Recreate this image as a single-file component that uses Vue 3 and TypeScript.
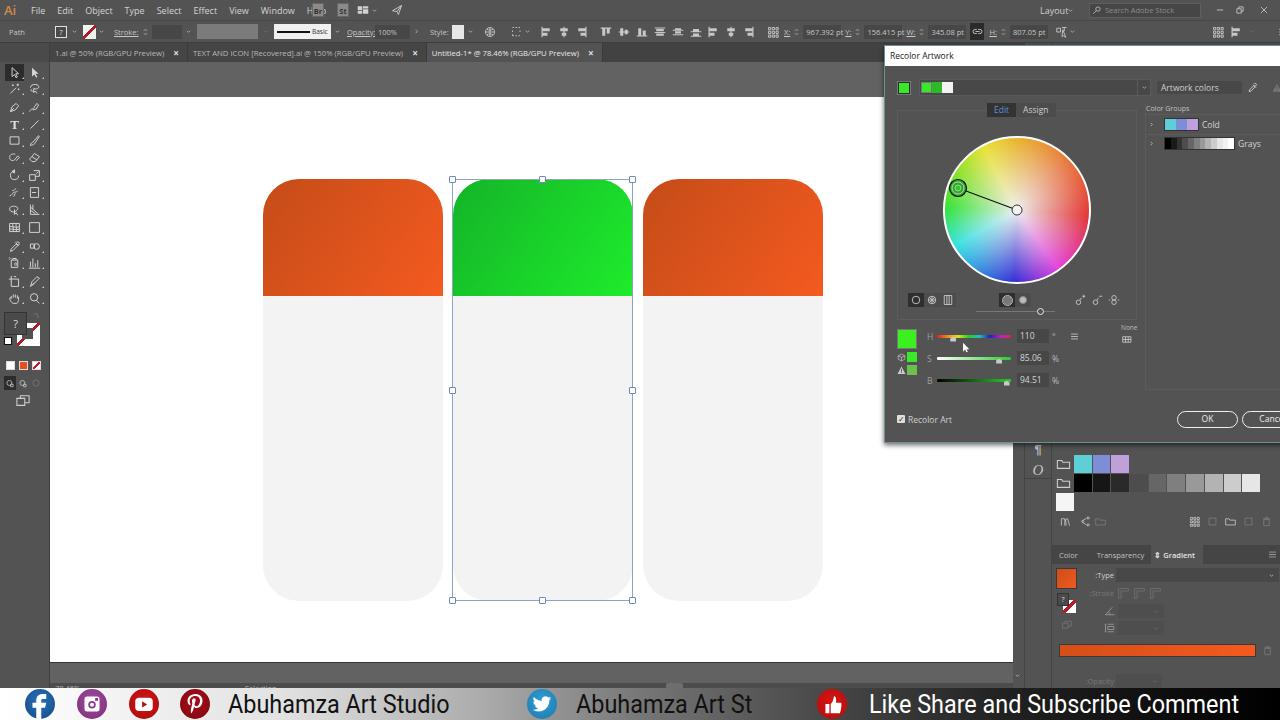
<script setup lang="ts">
import { h } from 'vue'
import type { FunctionalComponent } from 'vue'

const strokeIcons: Record<string, string> = {
  chev: 'M5 6.5 8 9.5 11 6.5',
  chevR: 'M6.5 5 9.5 8 6.5 11',
  select: 'M5 2V13L8 10.5 10 14.5 11.5 13.5 9.5 9.5H13Z',
  wand: 'M3 14 10 7M12 2V5M10.5 3.5H13.5M13 8V10M12 9H14M6 3V5M5 4H7',
  lasso: 'M3 7C3 4 6 3 9 3S14 5 13 7 9 9 7 8M7 8V13L9 11 11 14M4 9C3 11 5 12 6 11',
  pen: 'M3 13 5 7 10 3 13 6 9 11ZM3 13 7 9',
  curve: 'M2 13C4 8 6 12 8 7L11 3 13 5 10 10 6 11',
  line: 'M3 13 13 3',
  rect: 'M2.5 3.5H13.5V12.5H2.5Z',
  brush: 'M3 14C3 11 5 11 6 10L13 2 14 3 8 12C7 13 5 14 3 14Z',
  shaper: 'M2 8C2 4 6 3 9 4M2 8C2 11 5 13 8 11L12 6 14 8 10 12',
  eraser: 'M2 10 8 3 14 7 9 13H5Z M5 7 11 11',
  rotate: 'M13 8A5 5 0 1 1 8 3M8 1V5L5 3Z',
  scale: 'M2 7H9V14H2ZM7 2H14V9H9M10 6 13 3',
  warp: 'M2 12C5 12 5 9 7 8 9 7 10 8 12 6M5 5C7 7 8 4 10 3M7 13 9 9',
  free: 'M3 2H13V14H3ZM5 8 10 8',
  builder: 'M2 7C2 4 8 3 11 5S10 11 7 11 2 10 2 7ZM8 8V14L10 12 12 15',
  chart: 'M2 14H14M4 14V9M8 14V3M12 14V6M6 14V7M10 14V9',
  persp: 'M3 2V14H14M3 5 12 13M3 9 9 13M6 2V8',
  mesh: 'M2 3H14V13H2ZM2 7C6 6 9 9 14 7M2 10C6 9 9 12 14 10M6 3C5 7 8 9 6 13M10 3C9 7 12 9 10 13',
  drop: 'M3 14 4 11 10 5 12 7 6 13ZM9 3 13 7M10 2 11 3C12 1 15 3 13 5L14 6',
  blend: 'M3 5H8V10H3ZM7 8A3.5 3.5 0 1 0 14 8 3.5 3.5 0 1 0 7 8',
  spray: 'M4 5H12V14H4ZM6 5V3H10V5M8 10A1.5 1.5 0 1 0 8 9.9M1 2H2M1 4H2M3 3H4',
  column: 'M3 14V7M6 14V3M9 14V9M12 14V5M1 15H15',
  board: 'M4 5H13V14H4ZM4 1V5H1M7 2H10',
  slice: 'M3 14 5 8 11 2 14 4 8 10ZM3 14 8 10',
  hand: 'M4 8V5M6.5 7V3M9 7V3M11.5 8V4M4 8 2.5 7C1 8 4 14 7 14H10C13 14 13 10 13 6',
  zoom: 'M3 6.5A4.5 4.5 0 1 0 12 6.5 4.5 4.5 0 1 0 3 6.5M10 10 14 14',
  globe: 'M2 8A6 6 0 1 0 14 8 6 6 0 1 0 2 8M2 8H14M8 2V14M4 4C6 6 10 6 12 4M4 12C6 10 10 10 12 12',
  dashed: 'M2 2H4M6 2H8M10 2H12M2 6V8M12 6V8M2 11V13H4M6 13H8M10 13H12',
  dgrid: 'M2 2H5V5H2ZM7 2H10V5H7ZM12 2H15V5H12ZM2 7H5V10H2ZM7 7H10V10H7ZM12 7H15V10H12ZM2 12H5V15H2ZM7 12H10V15H7ZM12 12H15V15H12Z',
  link: 'M7 5H4.5A3 3 0 0 0 4.5 11H7M9 5H11.5A3 3 0 0 1 11.5 11H9M5 8H11',
  trans: 'M1 3H6V8H1ZM8 2 14 2M11 2V7M9 5 13 15 10 13 8 14Z',
  step: 'M5 6 8 3 11 6M5 10 8 13 11 10',
  menu: 'M3 4.5H13M3 8H13M3 11.5H13',
  eye: 'M3 14 4 11 10 5 12 7 6 13ZM9 4 13 8M10 2 11 3C12 1 15 3 13 5L14 6',
  search: 'M6 6.5A3.5 3.5 0 1 0 13 6.5 3.5 3.5 0 1 0 6 6.5M7 9 2 14',
  min: 'M3 8H13',
  restore: 'M3 6H10V13H3ZM6 6V3H13V10H10',
  close: 'M3 3 13 13M13 3 3 13',
  rocket: 'M2 9 14 2 10 14 8 10ZM8 10 14 2',
  ring: 'M3 8A5 5 0 1 0 13 8 5 5 0 1 0 3 8',
  wheelSeg: 'M3 8A5 5 0 1 0 13 8 5 5 0 1 0 3 8M8 3V13M3 8H13M4.5 4.5 11.5 11.5M11.5 4.5 4.5 11.5',
  bars: 'M3 2H13V14H3ZM6.5 2V14M9.5 2V14',
  addC: 'M3 11A3 3 0 1 0 9 11 3 3 0 1 0 3 11M8 8 10 5M11 3H15M13 1V5',
  subC: 'M3 11A3 3 0 1 0 9 11 3 3 0 1 0 3 11M8 8 10 5M11 3H15',
  linkC: 'M5 5A3 3 0 1 1 11 5 3 3 0 1 1 5 5M5 11A3 3 0 1 1 11 11 3 3 0 1 1 5 11M1 8H3M13 8H15',
  table: 'M1 4H13V12H1ZM1 8H13M5 4V12M9 4V12',
  cube: 'M8 2 14 5V11L8 14 2 11V5ZM2 5 8 8 14 5M8 8V14',
  swapA: 'M4 3H11V9M9 7 11 9 13 7',
  folder: 'M1 4H6L7 6H15V13H1Z',
  lib: 'M2 14V4H7V14M9 14 8 5 11 4 14 14',
  share: 'M4 8A1.5 1.5 0 1 0 4 7.9M12 3A1.5 1.5 0 1 0 12 2.9M12 13A1.5 1.5 0 1 0 12 12.9M5 7 11 3M5 9 11 13',
  newPage: 'M3 3H13V13H3Z',
  trash: 'M4 5H12V14H4ZM3 4H13M6 2H10V4',
  ang: 'M2 13H14M2 13 11 3M8 13C8 11 7 10 6 9',
  asp: 'M5 3H13M5 13H13M1 3H3M2 3V13M1 13H3M5 6H13V10H5Z',
  grad: 'M2 2H14V14H2Z',
  corner1: 'M2 14V2H14V5H5V14Z',
  scr: 'M1 5H10V13H1ZM5 5V2H15V10H10',
  draw1: 'M3 8A4 4 0 1 0 11 8 4 4 0 1 0 3 8M9 10H13V14H9Z',
}

const FILLED = new Set(['direct', 'align1', 'align2', 'align3', 'align4', 'align5', 'align6', 'flyout', 'dist1', 'dist2', 'dist3', 'warn', 'thumb', 'cursor', 'layout'])
const fillIcons: Record<string, string> = {
  direct: 'M5 2V13L8 10.5 10 14.5 11.5 13.5 9.5 9.5H13Z',
  align1: 'M2 1H3.5V15H2ZM3.5 3H13V7H3.5ZM3.5 9H10V13H3.5Z',
  align2: 'M7.2 1H8.8V15H7.2ZM3 3H13V7H3ZM5 9H11V13H5Z',
  align3: 'M12.5 1H14V15H12.5ZM3 3H12.5V7H3ZM6 9H12.5V13H6Z',
  align4: 'M1 2H15V3.5H1ZM3 3.5H7V13H3ZM9 3.5H13V10H9Z',
  align5: 'M1 7.2H15V8.8H1ZM3 3H7V13H3ZM9 5H13V11H9Z',
  align6: 'M1 12.5H15V14H1ZM3 3H7V12.5H3ZM9 6H13V12.5H9Z',
  dist1: 'M1 2H15V3.2H1ZM1 8H15V9.2H1ZM3 4H13V7H3ZM3 10H13V13H3Z',
  dist2: 'M1 5H15V6.2H1ZM1 11H15V12.2H1ZM4 3H12V5H4ZM4 7H12V10H4Z',
  dist3: 'M1 7H15V8.2H1ZM1 13H15V14.2H1ZM4 4H12V7H4ZM4 10H12V13H4Z',
  warn: 'M8 1 15 14H1ZM7.2 5V10H8.8V5ZM7.2 11V12.5H8.8V11Z',
  thumb: 'M3 8H6V15H3ZM7 8C9 6 9 4 9.5 2 11 2 11.5 4 11 7H15C15.5 8 15 13 14 15H7Z',
  cursor: 'M3 1V14L6 11 8 15 10 14 8 10.5H12Z',
  layout: 'M1 3H7V8H1ZM8 3H15V6H8ZM8 7H15V13H8ZM1 9H7V13H1Z',
}

const Ic: FunctionalComponent<{ n: string }> = (props) => {
  const solid = FILLED.has(props.n)
  return h('svg', { class: 'ic', viewBox: '0 0 16 16' }, [
    h('path', {
      d: solid ? fillIcons[props.n] : strokeIcons[props.n],
      fill: solid ? 'currentColor' : 'none',
      stroke: solid ? 'none' : 'currentColor',
      'stroke-width': 1.2,
    }),
  ])
}
Ic.props = ['n']

const menus = ['File', 'Edit', 'Object', 'Type', 'Select', 'Effect', 'View', 'Window', 'Help']

const tabs = [
  { title: '1.ai @ 50% (RGB/GPU Preview)', active: false },
  { title: 'TEXT AND ICON [Recovered].ai @ 150% (RGB/GPU Preview)', active: false },
  { title: 'Untitled-1* @ 78.46% (RGB/GPU Preview)', active: true },
]

// tool palette, grouped the way Illustrator separates its sections
const toolGroups = [
  [['select', 'direct'], ['wand', 'lasso']],
  [['pen', 'curve'], ['T', 'line'], ['rect', 'brush'], ['shaper', 'eraser']],
  [['rotate', 'scale'], ['warp', 'free'], ['builder', 'persp']],
  [['mesh', 'grad']],
  [['drop', 'blend'], ['spray', 'column']],
  [['board', 'slice'], ['hand', 'zoom']],
]

const coords = [
  { label: 'X:', value: '967.392 pt', cls: 'wx' },
  { label: 'Y:', value: '156.415 pt', cls: 'wy' },
  { label: 'W:', value: '345.08 pt', cls: 'ww' },
]

const cards = [
  { id: 1, tone: 'orange' },
  { id: 2, tone: 'green' },
  { id: 3, tone: 'orange' },
]

const handles = ['tl', 'tc', 'tr', 'ml', 'mr', 'bl', 'bc', 'br']

const sliders = [
  { label: 'H', cls: 'hue', thumb: 22, value: '110', unit: '°' },
  { label: 'S', cls: 'sat', thumb: 84, value: '85.06', unit: '%' },
  { label: 'B', cls: 'bri', thumb: 94, value: '94.51', unit: '%' },
]

const grays = ['#000', '#161616', '#2a2a2a', '#4d4d4d', '#666', '#7f7f7f', '#999', '#b3b3b3', '#ccc', '#e6e6e6']
const coldColors = ['#5ecfd6', '#7e8ed6', '#c0a0dc']
const grayRamp = ['#000', '#1a1a1a', '#333', '#4d4d4d', '#666', '#808080', '#999', '#b3b3b3', '#ccc', '#e6e6e6', '#f2f2f2', '#fff']
</script>

<template>
  <div class="app">
    <header class="menubar">
      <span class="ai">Ai</span>
      <nav class="menus">
        <span v-for="m in menus" :key="m" class="menu">{{ m }}</span>
      </nav>
      <span class="bridge">Br</span>
      <span class="bridge st">St</span>
      <Ic n="layout" class="layout-ic" />
      <Ic n="chev" class="chev c-a" />
      <Ic n="rocket" class="rocket" />
      <div class="menu-right">
        <span class="layout-label">Layout</span>
        <Ic n="chev" class="chev" />
        <div class="search"><Ic n="search" class="search-ic" /><span>Search Adobe Stock</span></div>
        <Ic n="min" class="win w-min" />
        <Ic n="restore" class="win w-res" />
        <Ic n="close" class="win w-close" />
      </div>
    </header>

    <div class="controlbar">
      <span class="path-label">Path</span>
      <span class="fillbox">?</span>
      <Ic n="chev" class="chev m3" />
      <span class="strokebox"></span>
      <Ic n="chev" class="chev m1" />
      <span class="clabel u stroke-l">Stroke:</span>
      <Ic n="step" class="step" />
      <span class="cinput wstroke"></span>
      <Ic n="chev" class="chev m2" />
      <span class="varbox"></span>
      <Ic n="chev" class="chev m3 dim" />
      <span class="basic"><i></i>Basic</span>
      <Ic n="chev" class="chev m2" />
      <span class="clabel u op-l">Opacity:</span>
      <span class="cinput wop">100%</span>
      <Ic n="chevR" class="chev m2" />
      <span class="clabel style-l">Style:</span>
      <span class="stylebox"></span>
      <Ic n="chev" class="chev m2" />
      <Ic n="globe" class="tool-ic glb" />
      <Ic n="dashed" class="tool-ic dsh" />
      <Ic n="chev" class="chev" />
      <div class="aligns first">
        <Ic n="align1" class="al" /><Ic n="align2" class="al" /><Ic n="align3" class="al" />
      </div>
      <div class="aligns second">
        <Ic n="align4" class="al" /><Ic n="align5" class="al" /><Ic n="align6" class="al" />
        <Ic n="dist1" class="al" /><Ic n="dist2" class="al" /><Ic n="dist3" class="al" />
      </div>
      <div class="aligns fourth">
        <Ic n="align1" class="al" /><Ic n="align2" class="al" /><Ic n="align3" class="al" />
      </div>
      <Ic n="dgrid" class="tool-ic dgrid" />
      <div v-for="c in coords" :key="c.label" class="coord" :class="c.cls">
        <span class="clabel u">{{ c.label }}</span>
        <Ic n="step" class="step" />
        <span class="cinput">{{ c.value }}</span>
      </div>
      <span class="linkbtn"><Ic n="link" class="link-ic" /></span>
      <div class="coord wh">
        <span class="clabel u">H:</span>
        <Ic n="step" class="step" />
        <span class="cinput">807.05 pt</span>
      </div>
      <Ic n="trans" class="tool-ic trn" />
      <Ic n="chev" class="chev" />
      <div class="cb-right">
        <Ic n="dgrid" class="tool-ic" />
        <Ic n="align1" class="tool-ic" />
        <Ic n="chev" class="chev dim" />
        <Ic n="menu" class="tool-ic list" />
      </div>
    </div>

    <div class="main">
      <aside class="tools">
        <div class="tool-grip"></div>
        <div v-for="(group, g) in toolGroups" :key="g" class="tool-group">
          <div v-for="(row, r) in group" :key="r" class="tool-row">
            <span v-for="t in row" :key="t" class="tool" :class="{ on: t === 'select' }">
              <span v-if="t === 'T'" class="t-glyph">T</span>
              <Ic v-else :n="t" class="tool-svg" />
              <i class="flyout"></i>
            </span>
          </div>
        </div>
        <div class="fillstroke">
          <span class="fs-stroke"><i></i></span>
          <span class="fs-fill">?</span>
          <Ic n="swapA" class="fs-swap" />
          <span class="fs-default"></span>
        </div>
        <div class="modes">
          <span class="mode white"></span>
          <span class="mode orange"></span>
          <span class="mode none"></span>
        </div>
        <div class="modes draw">
          <span class="dm on"><Ic n="draw1" class="dm-ic" /></span>
          <span class="dm"><Ic n="draw1" class="dm-ic" /></span>
          <span class="dm off"><Ic n="ring" class="dm-ic" /></span>
        </div>
        <Ic n="scr" class="screen" />
      </aside>

      <section class="center">
        <div class="tabs">
          <div v-for="t in tabs" :key="t.title" class="tab" :class="{ active: t.active }">
            <span>{{ t.title }}</span>
            <b>×</b>
          </div>
        </div>
        <div class="stage">
          <div class="docview">
            <div class="pasteboard">
              <div class="artboard">
                <div v-for="c in cards" :key="c.id" class="card">
                  <div class="card-top" :class="c.tone"></div>
                  <div v-if="c.tone === 'green'" class="selection">
                    <i v-for="hd in handles" :key="hd" class="handle" :class="hd"></i>
                  </div>
                </div>
              </div>
            </div>
            <div class="hscroll">
              <div class="status">
                <span class="zoom-val">78.46%</span>
                <span class="sel-state">Selection</span>
                <i class="thumb"></i>
              </div>
            </div>
          </div>
          <div class="vscroll"><Ic n="chev" class="chev" /></div>
        </div>
      </section>

      <div class="dock">
        <div class="dock-box">
          <span class="para">¶</span>
          <span class="oglyph">O</span>
        </div>
      </div>

      <aside class="panels">
        <div class="swatches">
          <div class="sw-row">
            <Ic n="folder" class="folder" />
            <span v-for="c in coldColors" :key="c" class="sw" :style="{ background: c }"></span>
          </div>
          <div class="sw-row">
            <Ic n="folder" class="folder" />
            <span v-for="c in grays" :key="c" class="sw" :style="{ background: c }"></span>
          </div>
          <div class="sw-row">
            <span class="sw last"></span>
          </div>
          <div class="sw-foot">
            <Ic n="lib" class="ft" /><Ic n="share" class="ft s2" /><Ic n="folder" class="ft dimmer s3" />
            <Ic n="dgrid" class="ft s4" /><Ic n="newPage" class="ft dimmer s5" /><Ic n="folder" class="ft s5" />
            <Ic n="newPage" class="ft dimmer s5" /><Ic n="trash" class="ft dimmer s5" />
          </div>
        </div>
        <div class="ptabs">
          <span class="ptab">Color</span>
          <span class="ptab">Transparency</span>
          <span class="ptab active">⇕ Gradient</span>
          <Ic n="menu" class="ptab-menu" />
        </div>
        <div class="gradient">
          <div class="g-top">
            <div class="g-left">
              <span class="g-swatch"></span>
              <span class="g-mini"><i class="q">?</i><i class="s"></i></span>
              <Ic n="scr" class="g-rev" />
            </div>
            <div class="g-right">
              <div class="g-line"><span class="g-label on">Type:</span><span class="g-select wide"><Ic n="chev" class="chev" /></span></div>
              <div class="g-line l2"><span class="g-label">Stroke:</span><span class="g-btns"><Ic n="corner1" class="gb" /><Ic n="corner1" class="gb" /><Ic n="corner1" class="gb" /></span></div>
              <div class="g-line l3"><Ic n="ang" class="g-lic" /><span class="g-select"><Ic n="chev" class="chev dim" /></span></div>
              <div class="g-line l4"><Ic n="asp" class="g-lic" /><span class="g-select"><Ic n="chev" class="chev dim" /></span></div>
            </div>
          </div>
          <div class="g-barline">
            <div class="g-bar"></div>
            <Ic n="trash" class="g-trash" />
          </div>
          <div class="g-line foot"><span class="g-label">Opacity:</span><span class="g-select"><Ic n="chev" class="chev dim" /></span></div>
          <div class="g-line foot2"><span class="g-label">Location:</span><span class="g-select"><Ic n="chev" class="chev dim" /></span></div>
        </div>
      </aside>
    </div>

    <footer class="banner">
      <span class="soc fb"><svg viewBox="0 0 24 24"><path d="M14 8h3V4h-3c-3 0-5 2-5 5v2H6v4h3v9h4v-9h3l1-4h-4V9c0-.6.4-1 1-1z" fill="#fff" /></svg></span>
      <span class="soc ig"><svg viewBox="0 0 24 24"><rect x="6" y="6" width="12" height="12" rx="2" fill="#fff" /><circle cx="12" cy="12.5" r="3" fill="#8e3a8e" /><circle cx="12" cy="12.5" r="1.6" fill="#fff" /><rect x="14.5" y="7.2" width="2.3" height="2.3" fill="#8e3a8e" /></svg></span>
      <span class="soc yt"><svg viewBox="0 0 24 24"><rect x="5" y="7" width="14" height="10.5" rx="3" fill="#fff" /><path d="M10.5 9.8v5l4-2.5z" fill="#b01010" /></svg></span>
      <span class="soc pin"><svg viewBox="0 0 24 24"><path d="M12.5 4C8 4 6 7 6 9.6c0 1.5.6 2.9 1.8 3.4.2.1.4 0 .4-.2l.2-.7c0-.2 0-.3-.1-.5-.4-.4-.6-1-.6-1.8 0-2.3 1.7-4.3 4.5-4.3 2.4 0 3.8 1.5 3.8 3.5 0 2.6-1.2 4.8-2.9 4.8-1 0-1.7-.8-1.4-1.8.3-1.1.8-2.4.8-3.2 0-.7-.4-1.4-1.2-1.4-1 0-1.7 1-1.7 2.3 0 .8.3 1.4.3 1.4l-1.1 4.8c-.3 1.4 0 3.2 0 3.4 0 .1.1.1.2.1.1-.1 1.2-1.5 1.6-2.9l.6-2.4c.3.6 1.2 1.1 2.1 1.1 2.8 0 4.7-2.6 4.7-6C18.1 6.4 15.8 4 12.5 4z" fill="#fff" /></svg></span>
      <span class="ban-text t1">Abuhamza Art Studio</span>
      <span class="soc tw"><svg viewBox="0 0 24 24"><g transform="translate(4.5 4.5) scale(.62)"><path d="M23.953 4.57a10 10 0 01-2.825.775 4.958 4.958 0 002.163-2.723c-.951.555-2.005.959-3.127 1.184a4.92 4.92 0 00-8.384 4.482C7.69 8.095 4.067 6.13 1.64 3.162a4.822 4.822 0 00-.666 2.475c0 1.71.87 3.213 2.188 4.096a4.904 4.904 0 01-2.228-.616v.06a4.923 4.923 0 003.946 4.827 4.996 4.996 0 01-2.212.085 4.936 4.936 0 004.604 3.417 9.867 9.867 0 01-6.102 2.105c-.39 0-.779-.023-1.17-.067a13.995 13.995 0 007.557 2.209c9.053 0 13.998-7.496 13.998-13.985 0-.21 0-.42-.015-.63A9.935 9.935 0 0024 4.59z" fill="#fff" /></g></svg></span>
      <span class="ban-text t2">Abuhamza Art St</span>
      <span class="soc lk"><svg viewBox="0 0 16 16"><path d="M3 8H6V15H3ZM7 8C9 6 9 4 9.5 2 11 2 11.5 4 11 7H15C15.5 8 15 13 14 15H7Z" fill="#fff" transform="translate(2.4 2.4) scale(.7)" /></svg></span>
      <span class="ban-text t3">Like Share and Subscribe Comment</span>
    </footer>

    <div class="dialog">
      <div class="dlg-title">Recolor Artwork</div>
      <div class="dlg-body">
        <div class="dlg-head">
          <span class="cur-swatch"></span>
          <div class="harmony">
            <span class="h1"></span><span class="h2"></span><span class="h3"></span>
            <span class="h-chev"><Ic n="chev" class="chev" /></span>
          </div>
          <span class="art-colors">Artwork colors</span>
          <Ic n="eye" class="eyedrop" />
          <Ic n="warn" class="saveic" />
        </div>
        <div class="dlg-main">
          <div class="dlg-left">
            <div class="seg">
              <span class="seg-on">Edit</span>
              <span>Assign</span>
            </div>
            <div class="wheel-panel">
              <div class="wheel">
                <svg class="wheel-over" viewBox="0 0 148 148">
                  <line x1="15" y1="52" x2="74" y2="74" stroke="#111" stroke-width="1.2" />
                  <circle cx="74" cy="74" r="5" fill="#f4f4f4" stroke="#333" />
                  <circle cx="15" cy="52" r="8.5" fill="#2fa82a" stroke="#111" stroke-width="1.2" />
                  <circle cx="15" cy="52" r="6" fill="none" stroke="#ddd" stroke-width=".8" />
                  <circle cx="15" cy="52" r="3" fill="#2fc82a" stroke="#ddd" stroke-width=".6" />
                </svg>
              </div>
              <div class="wheel-tools">
                <div class="wt-group">
                  <span class="wt on"><Ic n="ring" class="wt-ic" /></span>
                  <span class="wt"><Ic n="wheelSeg" class="wt-ic" /></span>
                  <span class="wt"><Ic n="bars" class="wt-ic" /></span>
                </div>
                <div class="wt-mid">
                  <div class="wt-group">
                    <span class="wt on"><i class="dot big"></i></span>
                    <span class="wt"><i class="dot"></i></span>
                  </div>
                  <div class="mini-slider"><i></i></div>
                </div>
                <div class="wt-group plain">
                  <Ic n="addC" class="wt-ic" />
                  <Ic n="subC" class="wt-ic" />
                  <Ic n="linkC" class="wt-ic" />
                </div>
              </div>
            </div>
            <div class="hsb">
              <div class="hsb-left">
                <span class="big-swatch"></span>
                <div class="small-row"><Ic n="cube" class="hsb-ic" /><span class="small-sw a"></span></div>
                <div class="small-row"><Ic n="warn" class="hsb-ic" /><span class="small-sw b"></span></div>
              </div>
              <div class="hsb-rows">
                <div v-for="s in sliders" :key="s.label" class="hsb-row">
                  <span class="hsb-l">{{ s.label }}</span>
                  <div class="track" :class="s.cls">
                    <i class="thumb-tri" :style="{ left: s.thumb + '%' }"></i>
                  </div>
                  <span class="hsb-in">{{ s.value }}</span>
                  <span class="hsb-u">{{ s.unit }}</span>
                  <Ic v-if="s.label === 'H'" n="menu" class="hsb-menu" />
                </div>
              </div>
              <div class="none-box">
                <span>None</span>
                <Ic n="table" class="none-ic" />
              </div>
            </div>
          </div>
          <div class="dlg-right">
            <div class="cg-title">Color Groups</div>
            <div class="cg-row">
              <Ic n="chevR" class="chev" />
              <span class="cg-sw cold"><i v-for="c in coldColors" :key="c" :style="{ background: c }"></i></span>
              <span>Cold</span>
            </div>
            <div class="cg-row">
              <Ic n="chevR" class="chev" />
              <span class="cg-sw gr"><i v-for="c in grayRamp" :key="c" :style="{ background: c }"></i></span>
              <span>Grays</span>
            </div>
          </div>
        </div>
        <div class="dlg-foot">
          <label class="chk"><i>✓</i>Recolor Art</label>
          <span class="btn ok">OK</span>
          <span class="btn cancel">Cancel</span>
        </div>
      </div>
      <Ic n="cursor" class="mouse" />
    </div>
  </div>
</template>

<style>
html, body { margin: 0; background: #535353; }
</style>

<style scoped>
.app {
  position: relative;
  width: 1280px;
  height: 720px;
  overflow: hidden;
  display: flex;
  flex-direction: column;
  background: #535353;
  color: #cfcfcf;
  font-family: "Open Sans", "Noto Sans", sans-serif;
  font-size: 8.5px;
}
.ic { display: block; flex: none; width: 12px; height: 12px; }
.chev { width: 9px; height: 9px; color: #d0d0d0; }
.dim { opacity: .3; }

/* menu bar */
.menubar { height: 20px; flex: none; display: flex; align-items: center; position: relative; }
.ai { width: 31px; padding-left: 4px; box-sizing: border-box; color: #d08a4a; font: 600 13px "Open Sans", sans-serif; }
.menus { display: flex; width: 272px; }
.menu { font-size: 9px; color: #d4d4d4; margin-right: 12px; }
.menu:nth-child(3) { margin-right: 12px; }
.bridge { width: 12px; height: 14px; margin-left: 9px; background: #8a8a8a; color: #333; font-size: 7.5px; font-weight: 700; text-align: center; line-height: 14px; border: 1px solid #666; box-sizing: border-box; }
.bridge.st { margin-left: 13px; }
.layout-ic { margin-left: 8px; color: #d0d0d0; }
.c-a { margin-left: 1px; }
.rocket { margin-left: 12px; color: #cfcfcf; }
.menu-right { position: absolute; left: 1040px; top: 0; right: 0; height: 20px; display: flex; align-items: center; }
.layout-label { font-size: 9px; color: #d0d0d0; width: 26px; }
.search { margin-left: 14px; width: 112px; height: 15px; background: #464646; border: 1px solid #5e5e5e; box-sizing: border-box; display: flex; align-items: center; color: #8c8c8c; font-size: 7.5px; gap: 3px; padding-left: 2px; }
.search-ic { width: 10px; height: 10px; color: #ccc; }
.win { width: 10px; height: 10px; color: #d8d8d8; }
.w-min { margin-left: 14px; }
.w-res { margin-left: 10px; }
.w-close { margin-left: 14px; }

/* control bar */
.controlbar { height: 23px; flex: none; display: flex; align-items: center; border-top: 1px solid #474747; border-bottom: 1px solid #3e3e3e; box-sizing: border-box; position: relative; font-size: 7.5px; color: #c6c6c6; }
.path-label { width: 55px; padding-left: 9px; box-sizing: border-box; }
.fillbox { width: 12px; height: 12px; border: 1px solid #e2e2e2; box-sizing: border-box; text-align: center; font-size: 8px; line-height: 10px; color: #ddd; background: #4a4a4a; }
.m1 { margin-left: 1px; }
.m2 { margin-left: 2px; }
.m3 { margin-left: 3px; }
.strokebox { width: 13px; height: 14px; margin-left: 4px; background: linear-gradient(135deg, #f2f2f2 44%, #b01c2a 44%, #b01c2a 56%, #f2f2f2 56%); }
.clabel { white-space: nowrap; }
.u { text-decoration: underline; }
.stroke-l { margin-left: 8px; width: 27px; }
.step { width: 9px; height: 14px; color: #c8c8c8; }
.cinput { height: 14px; line-height: 14px; background: #474747; color: #c6c6c6; box-sizing: border-box; padding-left: 3px; white-space: nowrap; }
.wstroke { width: 30px; margin-left: 2px; }
.varbox { width: 61px; height: 15px; margin-left: 4px; background: #7b7b7b; }
.basic { width: 57px; height: 15px; margin-left: 4px; background: #f0f0f0; color: #333; display: flex; align-items: center; gap: 2px; padding-left: 3px; box-sizing: border-box; font-size: 6.5px; }
.basic i { width: 33px; height: 2px; background: #111; }
.op-l { margin-left: 5px; width: 28px; }
.wop { width: 35px; }
.style-l { margin-left: 9px; width: 22px; }
.stylebox { width: 12px; height: 14px; background: #e6e6e6; }
.tool-ic { width: 12px; height: 12px; color: #c8c8c8; }
.glb { margin-left: 9px; }
.dsh { margin-left: 15px; }
.aligns { display: flex; }
.al { width: 12px; height: 12px; color: #c8c8c8; margin: 0 3px; }
.first { margin-left: 5px; }
.second { margin-left: 6px; }
.fourth { margin-left: -1px; }
.dgrid { margin-left: 9px; }
.coord { display: flex; align-items: center; gap: 2px; }
.wx { margin-left: 5px; }
.wx .cinput, .wy .cinput, .ww .cinput, .wh .cinput { width: 38px; }
.wy, .ww { margin-left: 4px; }
.linkbtn { width: 14px; height: 17px; margin-left: 4px; background: #2b2b2b; display: flex; align-items: center; justify-content: center; }
.link-ic { width: 11px; height: 11px; color: #ddd; }
.wh { margin-left: 5px; }
.trn { margin-left: 8px; }
.cb-right { position: absolute; left: 1212px; top: 0; bottom: 0; display: flex; align-items: center; gap: 6px; }
.list { margin-left: 14px; }

/* main */
.main { flex: 1; min-height: 0; display: flex; }

/* tools */
.tools { width: 50px; flex: none; display: flex; flex-direction: column; border-right: 1px solid #3f3f3f; box-sizing: border-box; }
.tool-grip { height: 19px; flex: none; background: #4a4a4a; }
.tool-group { margin-top: 2px; }
.tool-group:first-of-type { margin-top: 0; }
.tool-row { display: flex; height: 16.6px; padding-left: 5px; }
.tool { position: relative; width: 19px; display: flex; align-items: center; justify-content: center; margin-right: 1px; }
.tool.on { background: #2c2c2c; }
.tool-svg { width: 13px; height: 13px; color: #d6d6d6; }
.t-glyph { font: 700 13px/1 "Liberation Serif", serif; color: #dedede; }
.flyout { position: absolute; right: 0; bottom: 2px; width: 0; height: 0; border-left: 2px solid transparent; border-bottom: 2px solid #ccc; }
.fillstroke { position: relative; height: 45px; margin-top: 5px; flex: none; }
.fs-stroke { position: absolute; left: 17px; top: 12px; width: 23px; height: 23px; background: linear-gradient(135deg, #fff 44%, #b01c2a 44%, #b01c2a 54%, #fff 54%); box-sizing: border-box; }
.fs-stroke i { position: absolute; left: 5px; top: 5px; width: 11px; height: 11px; background: #505050; }
.fs-fill { position: absolute; left: 4px; top: 1px; width: 23px; height: 23px; background: #4a4a4a; border: 1px solid #333; box-sizing: border-box; text-align: center; line-height: 21px; font-size: 11px; color: #ddd; }
.fs-swap { position: absolute; left: 31px; top: 1px; width: 10px; height: 10px; color: #777; }
.fs-default { position: absolute; left: 4px; top: 26px; width: 6px; height: 6px; background: #fff; border: 1px solid #111; }
.modes { display: flex; gap: 4px; padding-left: 6px; height: 13px; margin-top: 3px; flex: none; align-items: center; }
.mode { width: 9px; height: 9px; border: 1px solid #ddd; box-sizing: border-box; }
.mode.white { background: #fff; }
.mode.orange { background: #e2501c; }
.mode.none { background: linear-gradient(135deg, #fff 38%, #c01c2a 38%, #c01c2a 62%, #fff 62%); }
.draw { margin-top: 4px; gap: 1px; padding-left: 4px; height: 14px; }
.dm { width: 12px; height: 14px; display: flex; align-items: center; justify-content: center; color: #ccc; }
.dm.on { background: #2c2c2c; }
.dm.off { opacity: .3; }
.dm-ic { width: 10px; height: 10px; }
.screen { margin: 4px 0 0 15px; width: 16px; height: 14px; color: #cfcfcf; }

/* center */
.center { width: 975px; flex: none; display: flex; flex-direction: column; min-height: 0; }
.tabs { height: 19px; flex: none; display: flex; background: #424242; }
.tab { display: flex; align-items: center; height: 100%; padding: 0 8px 0 5px; gap: 9px; color: #b8b8b8; font-size: 7.7px; white-space: nowrap; background: #454545; border-right: 1px solid #3a3a3a; box-sizing: border-box; }
.tab b { font-size: 10px; color: #ddd; }
.tab.active { background: #535353; color: #e8e8e8; }
.stage { flex: 1; min-height: 0; display: flex; }
.docview { width: 963px; flex: none; display: flex; flex-direction: column; }
.pasteboard { flex: 1; min-height: 0; background: #626262; padding: 35px 0 20px; display: flex; box-sizing: border-box; }
.artboard { flex: 1; background: #fff; border-bottom: 1px solid #333; display: flex; gap: 10px; padding: 82px 0 0 213px; box-sizing: border-box; }
.card { position: relative; width: 180px; height: 422px; background: #f3f3f3; border-radius: 36px; }
.card-top { height: 117px; border-radius: 36px 36px 0 0; }
.orange { background: linear-gradient(125deg, #c44c18, #f45a20); }
.green { background: linear-gradient(125deg, #14b428, #1eec2c); }
.selection { position: absolute; inset: 0 0 0 -1px; border: 1px solid #8ea4c6; }
.handle { position: absolute; width: 5px; height: 5px; background: #fff; border: 1px solid #6f8ab4; border-radius: 1px; }
.tl { left: -4px; top: -4px; }
.tc { left: calc(50% - 3.5px); top: -4px; }
.tr { right: -4px; top: -4px; }
.ml { left: -4px; top: calc(50% - 3.5px); }
.mr { right: -4px; top: calc(50% - 3.5px); }
.bl { left: -4px; bottom: -4px; }
.bc { left: calc(50% - 3.5px); bottom: -4px; }
.br { right: -4px; bottom: -4px; }
.hscroll { height: 5px; flex: none; overflow: hidden; background: #4c4c4c; }
.status { position: relative; display: flex; font-size: 7.5px; color: #b5b5b5; }
.zoom-val { margin-left: 5px; width: 190px; }
.thumb { position: absolute; left: 616px; top: 0; width: 17px; height: 5px; background: #6e6e6e; border-radius: 2px 2px 0 0; }
.vscroll { width: 12px; flex: none; display: flex; align-items: flex-end; padding-bottom: 8px; box-sizing: border-box; border-right: 1px solid #444; background: #535353; }
.dock { width: 27px; flex: none; border-right: 1px solid #444; box-sizing: border-box; }
.dock-box { margin-top: 397px; height: 38px; border-bottom: 1px solid #444; display: flex; flex-direction: column; align-items: center; color: #c4c4c4; }
.para { font: 700 13px/20px "Liberation Sans", sans-serif; }
.oglyph { font: italic 15px/20px "Liberation Serif", serif; }

/* right panels */
.panels { flex: 1; min-width: 0; display: flex; flex-direction: column; }
.swatches { height: 87px; margin-top: 412px; flex: none; padding-left: 4px; }
.sw-row { display: flex; gap: 0; align-items: center; height: 19px; }
.sw-row:first-child { height: 18px; margin-top: 0; }
.folder { width: 15px; height: 14px; margin-right: 3px; color: #cfcfcf; background: none; }
.sw { width: 17.7px; height: 18px; margin-right: 1px; flex: none; }
.sw.last { background: #f5f5f5; width: 18px; }
.sw-foot { display: flex; align-items: center; margin-top: 3px; height: 15px; color: #c8c8c8; padding-left: 4px; }
.ft { width: 11px; height: 11px; }
.s2 { margin-left: 8px; }
.s3 { margin-left: 5px; }
.s4 { margin-left: 83px; }
.s5 { margin-left: 7px; }
.dimmer { opacity: .35; }
.ptabs { height: 19px; flex: none; margin-top: 3px; background: #454545; display: flex; align-items: stretch; font-size: 7.5px; color: #c0c0c0; position: relative; }
.ptab { display: flex; align-items: center; padding: 0 7px; }
.ptab.active { background: #535353; color: #e4e4e4; font-weight: 600; margin-left: auto; }
.ptab:nth-child(2) { margin-left: 5px; }
.ptab.active { margin-left: 0; padding: 0 8px 0 3px; }
.ptab-menu { position: absolute; right: 2px; top: 4px; width: 11px; height: 11px; color: #aaa; }
.gradient { flex: 1; position: relative; font-size: 7.5px; }
.g-top { display: flex; padding: 4px 0 0 4px; }
.g-left { width: 36px; flex: none; display: flex; flex-direction: column; }
.g-swatch { width: 21px; height: 21px; background: linear-gradient(135deg, #cc4e18, #f05a20); border: 1px solid #3a3a3a; box-sizing: border-box; }
.g-mini { position: relative; height: 20px; width: 20px; margin-top: 4px; display: block; }
.g-mini .q { position: absolute; left: 1px; top: 0; width: 12px; height: 13px; background: #4a4a4a; border: 1px solid #333; box-sizing: border-box; font-style: normal; font-size: 7px; text-align: center; line-height: 11px; color: #ddd; z-index: 1; }
.g-mini .s { position: absolute; left: 7px; top: 7px; width: 13px; height: 13px; background: linear-gradient(135deg, #fff 42%, #b01c2a 42%, #b01c2a 58%, #fff 58%); }
.g-rev { width: 10px; height: 10px; margin: 7px 0 0 6px; opacity: .3; }
.g-right { flex: 1; min-width: 0; }
.g-line { display: flex; align-items: center; height: 14px; padding-left: 2px; }
.g-label { width: 20px; text-align: right; margin-right: 2px; color: #777; white-space: nowrap; direction: rtl; }
.g-label.on { color: #d0d0d0; }
.g-select { width: 46px; height: 14px; background: #4e4e4e; display: flex; align-items: center; justify-content: flex-end; padding-right: 3px; box-sizing: border-box; }
.g-select.wide { width: 163px; background: #484848; }
.g-btns { display: flex; gap: 1px; }
.gb { width: 15px; height: 13px; color: #6e6e6e; }
.l2 { margin-top: 4px; }
.l3 { margin-top: 4px; }
.l4 { margin-top: 3px; }
.g-lic { width: 12px; height: 12px; margin: 0 2px 0 10px; color: #999; }
.g-barline { display: flex; align-items: center; margin-top: 9px; padding-left: 7px; }
.g-bar { width: 197px; height: 13px; box-sizing: border-box; border: 1px solid #3a3a3a; background: linear-gradient(90deg, #d64e18, #f45a20); }
.g-trash { width: 11px; height: 11px; margin-left: 6px; opacity: .3; }
.foot { margin-top: 17px; padding-left: 38px; }
.foot2 { margin-top: 4px; padding-left: 38px; }
.foot .g-label, .foot2 .g-label { width: 24px; }

/* banner */
.banner {
  position: relative;
  height: 32px;
  flex: none;
  display: flex;
  align-items: center;
  background: linear-gradient(90deg, #fff 0, #e2e2e2 22%, #aaa 38%, #777 50%, #555 60%, #222 78%, #000 100%);
  font-family: Roboto, "Open Sans", sans-serif;
}
.soc { width: 30px; height: 30px; border-radius: 50%; flex: none; display: block; }
.soc svg { display: block; width: 100%; height: 100%; }
.fb { margin-left: 25px; background: radial-gradient(circle at 50% 40%, #2a70b8, #124a88); }
.ig { margin-left: 22px; background: radial-gradient(circle at 50% 40%, #a04a9c, #7c2e7a); }
.yt { margin-left: 22px; background: radial-gradient(circle at 50% 40%, #d41414, #a80c0c); }
.pin { margin-left: 21px; background: radial-gradient(circle at 50% 40%, #a80c18, #7c0810); }
.ban-text { font-size: 26px; line-height: 32px; white-space: nowrap; transform-origin: left center; }
.t1 { margin-left: 18px; color: #111; width: 299px; transform: scaleX(.9); }
.tw { background: radial-gradient(circle at 50% 40%, #2f9ed8, #1e78a8); }
.t2 { margin-left: 19px; color: #111; width: 241px; transform: scaleX(.9); }
.lk { background: radial-gradient(circle at 50% 40%, #d81414, #b00c0c); }
.t3 { margin-left: 22px; color: #fff; transform: scaleX(.9); }

/* recolor dialog */
.dialog {
  position: absolute;
  left: 884px;
  top: 45px;
  width: 420px;
  height: 398px;
  background: #535353;
  border: 1px solid #6d8f96;
  box-sizing: border-box;
  box-shadow: 0 2px 5px rgba(0, 0, 0, .6);
  display: flex;
  flex-direction: column;
}
.dlg-title { height: 20px; flex: none; background: #fff; color: #222; font-size: 8.5px; line-height: 20px; padding-left: 5px; }
.dlg-body { flex: 1; padding: 13px 0 0 12px; display: flex; flex-direction: column; color: #cfcfcf; }
.dlg-head { display: flex; align-items: center; height: 17px; }
.cur-swatch { width: 14px; height: 14px; box-sizing: border-box; border: 2px solid #2f2f2f; outline: 1px solid #777; outline-offset: -1px; background: #3ae82a; }
.harmony { width: 232px; height: 17px; margin-left: 8px; background: #484848; border: 1px solid #5a5a5a; box-sizing: border-box; display: flex; align-items: center; padding-left: 1px; }
.h1 { width: 11px; height: 11px; background: #3ae82a; border: 1px solid #777; box-sizing: border-box; }
.h2 { width: 10px; height: 11px; background: #2fb82a; }
.h3 { width: 11px; height: 11px; background: #f2f2f2; }
.h-chev { margin-left: auto; width: 12px; height: 100%; border-left: 1px solid #5a5a5a; display: flex; align-items: center; justify-content: center; }
.art-colors { width: 85px; height: 13px; margin-left: 6px; background: #484848; font-size: 8.5px; line-height: 13px; padding-left: 4px; box-sizing: border-box; border-radius: 2px; }
.eyedrop { margin-left: 5px; width: 11px; height: 11px; color: #ddd; }
.saveic { margin-left: 14px; width: 10px; height: 10px; color: #777; }
.dlg-main { height: 287px; margin-top: 7px; flex: none; display: flex; }
.dlg-left { width: 240px; flex: none; display: flex; flex-direction: column; position: relative; }
.seg { position: absolute; left: 90px; top: 0; z-index: 1; height: 14px; display: flex; align-items: center; background: #4c4c4c; font-size: 8.5px; }
.seg span { padding: 0 7px; line-height: 14px; }
.seg-on { background: #333; color: #5a92da; }
.wheel-panel { margin-top: 7px; height: 210px; flex: none; border: 1px solid #5c5c5c; box-sizing: border-box; display: flex; flex-direction: column; align-items: center; padding-top: 25px; }
.wheel {
  position: relative;
  width: 148px;
  height: 148px;
  flex: none;
  box-sizing: border-box;
  border: 2px solid #fff;
  border-radius: 50%;
  background:
    radial-gradient(circle, rgba(238, 238, 238, 1) 0, rgba(238, 238, 238, .75) 20%, rgba(238, 238, 238, 0) 85%),
    conic-gradient(#e8a808 0deg, #e8601a 45deg, #e01010 95deg, #e020d8 145deg, #1008d0 182deg, #10a0e0 222deg, #10e0e0 240deg, #10e010 272deg, #80e000 305deg, #e8e010 332deg, #e8a808 360deg);
}
.wheel-over { position: absolute; left: -2px; top: -2px; width: 148px; height: 148px; }
.wheel-tools { width: 100%; display: flex; justify-content: space-between; padding: 9px 10px 0; box-sizing: border-box; }
.wt-group { display: flex; align-items: center; height: 14px; }
.wt-group.plain { gap: 5px; color: #c8c8c8; padding-right: 6px; }
.wt { width: 16px; height: 14px; display: flex; align-items: center; justify-content: center; background: #4c4c4c; color: #c8c8c8; }
.wt.on { background: #2e2e2e; }
.wt-ic { width: 12px; height: 12px; }
.wt-mid { display: flex; flex-direction: column; align-items: center; width: 80px; }
.dot { width: 6px; height: 6px; border-radius: 50%; background: #bbb; border: 1px solid #888; }
.dot.big { width: 7px; height: 7px; background: #777; outline: 1px solid #bbb; }
.mini-slider { width: 79px; height: 1px; background: #777; margin-top: 4px; position: relative; }
.mini-slider i { position: absolute; left: 61px; top: -3px; width: 7px; height: 7px; box-sizing: border-box; border: 1.5px solid #e8e8e8; border-radius: 50%; background: #535353; }
.hsb { display: flex; margin-top: 9px; position: relative; }
.hsb-left { width: 30px; flex: none; display: flex; flex-direction: column; }
.big-swatch { width: 20px; height: 20px; background: #3cf020; border: 1px solid #777; box-sizing: border-box; }
.small-row { display: flex; align-items: center; margin-top: 3px; height: 10px; }
.hsb-ic { width: 9px; height: 9px; margin-right: 1px; color: #ccc; }
.small-sw { width: 10px; height: 10px; }
.small-sw.a { background: #3ae82a; }
.small-sw.b { background: #6fbf4f; }
.hsb-rows { display: flex; flex-direction: column; gap: 8px; }
.hsb-row { display: flex; align-items: center; height: 14px; gap: 0; }
.hsb-l { width: 10px; color: #9e9e9e; font-size: 8.5px; }
.track { position: relative; width: 74px; height: 3px; border-radius: 1px; margin-right: 6px; }
.hue { background: linear-gradient(90deg, #e02020, #e09020, #e0e020, #20d020, #20c0c0, #2020c0, #c020c0, #e02060); }
.sat { background: linear-gradient(90deg, #fff, #2fc82f); }
.bri { background: linear-gradient(90deg, #000, #2fc82f); }
.thumb-tri { position: absolute; top: 2px; margin-left: -3px; width: 6px; height: 5px; background: #c8c8c8; clip-path: polygon(50% 0, 100% 40%, 100% 100%, 0 100%, 0 40%); }
.hsb-in { width: 32px; height: 14px; line-height: 14px; background: #474747; padding-left: 3px; box-sizing: border-box; font-size: 8.5px; color: #d6d6d6; }
.hsb-u { margin-left: 3px; width: 8px; font-size: 8.5px; color: #bbb; }
.hsb-menu { margin-left: 9px; width: 11px; height: 11px; color: #ccc; }
.none-box { position: absolute; left: 224px; top: -6px; display: flex; flex-direction: column; align-items: flex-start; font-size: 6.5px; color: #bbb; gap: 2px; }
.none-ic { width: 13px; height: 11px; color: #ccc; }
.dlg-right { margin-left: 8px; width: 200px; height: 287px; border-left: 1px solid #5c5c5c; border-bottom: 1px solid #5c5c5c; box-sizing: border-box; position: relative; padding-top: 11px; font-size: 8.5px; }
.cg-title { position: absolute; left: 0; top: 1px; font-size: 7px; color: #c0c0c0; white-space: nowrap; }
.cg-row { height: 19.5px; border-top: 1px solid #5c5c5c; box-sizing: border-box; display: flex; align-items: center; color: #d4d4d4; padding-left: 1px; }
.cg-sw { display: flex; height: 11px; margin: 0 3px 0 8px; border: 1px solid #333; }
.cg-sw i { display: block; }
.cold i { width: 11px; }
.gr i { width: 5.75px; }
.dlg-foot { display: flex; align-items: center; margin-top: 20px; height: 18px; }
.chk { display: flex; align-items: center; gap: 3px; font-size: 8.5px; width: 289px; }
.chk i { width: 8px; height: 8px; background: #ddd; color: #333; font-size: 8px; line-height: 8px; text-align: center; font-style: normal; border-radius: 1px; }
.btn { height: 17px; width: 61px; box-sizing: border-box; border: 1.5px solid #f0f0f0; border-radius: 9px; text-align: center; line-height: 14px; font-size: 8.5px; color: #eee; flex: none; }
.cancel { margin-left: 4px; }
.mouse { position: absolute; left: 76px; top: 295px; width: 11px; height: 13px; color: #fff; stroke: #000; z-index: 2; }
</style>
